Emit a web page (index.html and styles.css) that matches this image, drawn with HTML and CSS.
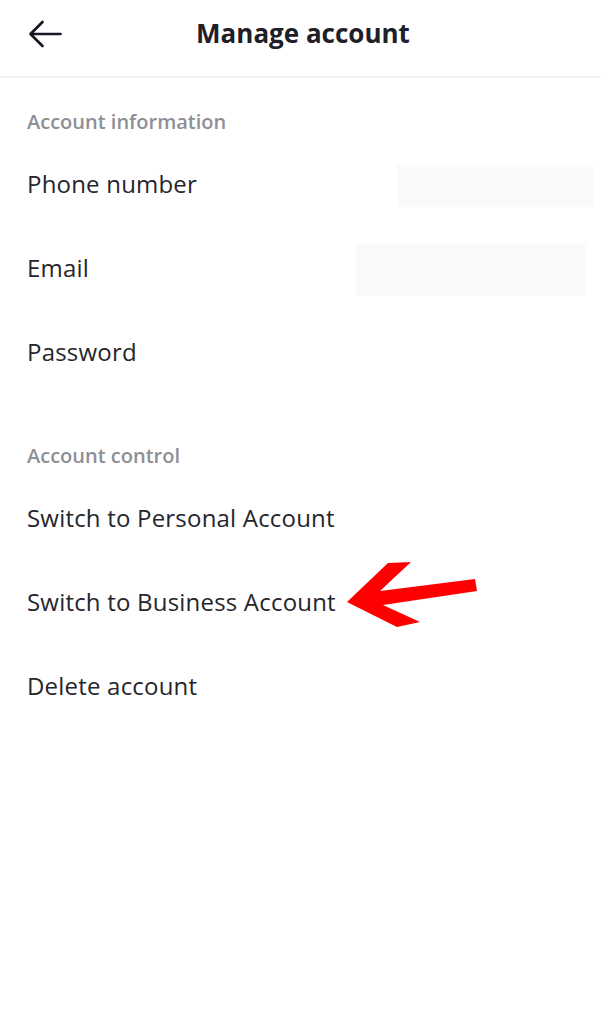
FILE: index.html
```html
<!DOCTYPE html>
<html>
<head>
<meta charset="utf-8">
<link rel="stylesheet" href="styles.css">
</head>
<body>
<div class="page">
  <header class="topbar">
    <svg class="back" width="36" height="30" viewBox="0 0 36 30"><path d="M33.5 14H3.5M15.5 2L3.5 14L15.5 26" fill="none" stroke="#161823" stroke-width="2.7" stroke-linecap="round" stroke-linejoin="round"/></svg>
    <h1 class="title">Manage account</h1>
  </header>
  <section class="group">
    <div class="group-title">Account information</div>
    <div class="row">Phone number<span class="blur blur-phone"></span></div>
    <div class="row">Email<span class="blur blur-email"></span></div>
    <div class="row">Password</div>
  </section>
  <section class="group">
    <div class="group-title">Account control</div>
    <div class="row">Switch to Personal Account</div>
    <div class="row">Switch to Business Account</div>
    <div class="row">Delete account</div>
  </section>
  <svg class="pointer" width="601" height="1024" viewBox="0 0 601 1024"><polygon points="347,602 388,563 411,562 380,591 475,579 477,591 383,605 420,622 397,627" fill="#fe0000"/></svg>
</div>
</body>
</html>
```
FILE: styles.css
```css
* { box-sizing: border-box; margin: 0; padding: 0; }
html, body { background: #fff; }
body { font-family: "Open Sans", "Liberation Sans", sans-serif; color: #161823; }
.page { position: relative; width: 601px; height: 1024px; overflow: hidden; }
.topbar { position: relative; height: 78px; border-bottom: 2px solid #f1f1f2; display: flex; align-items: center; justify-content: center; padding: 0 0 10px 5px; }
.back { position: absolute; left: 27px; top: 19.5px; }
.title { font-size: 26px; line-height: 30px; font-weight: 700; color: #1f2027; }
.group { padding: 0 27px; }
.group-title { height: 64px; padding-top: 32px; line-height: 24px; font-size: 20px; font-weight: 600; color: #8e8f95; }
.group + .group .group-title { height: 82px; padding-top: 50px; }
.row { position: relative; height: 84px; display: flex; align-items: center; padding-bottom: 2px; font-size: 24px; letter-spacing: 0.2px; color: #25262c; }
.blur { position: absolute; background: #fafafa; }
.blur-phone { left: 370px; top: 23px; width: 196px; height: 42px; }
.blur-email { left: 329px; top: 18px; width: 230px; height: 52px; }
.pointer { position: absolute; left: 0; top: 0; }
```
